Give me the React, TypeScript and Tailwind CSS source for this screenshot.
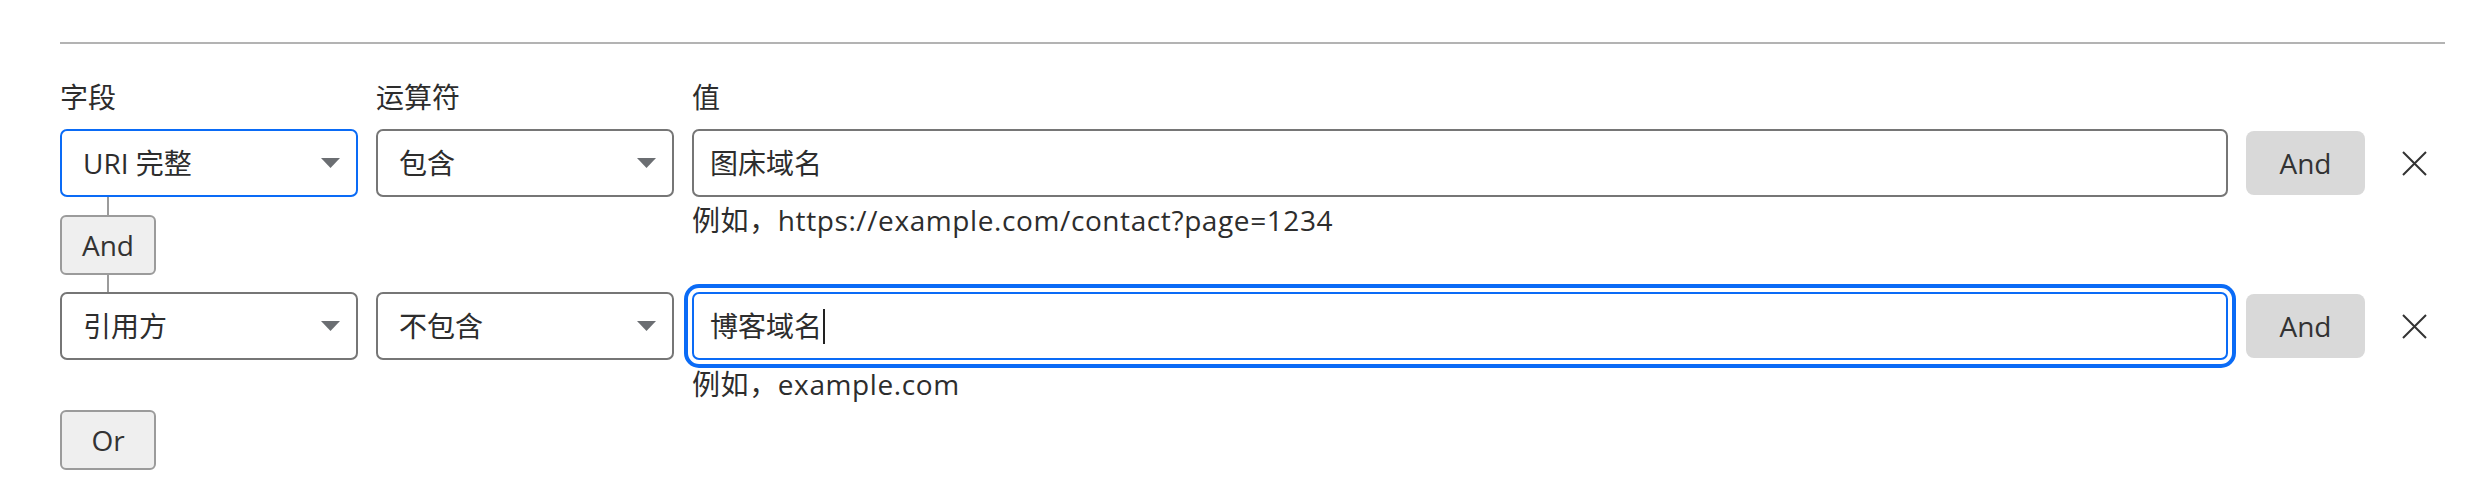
import React from 'react';

const font = { fontFamily: '"Open Sans", "Noto Sans CJK SC", sans-serif' };

function Caret() {
  return (
    <svg width="19" height="10" viewBox="0 0 19 10" className="shrink-0">
      <polygon points="0,0 19,0 9.5,10" fill="#6b6e72" />
    </svg>
  );
}

function FakeSelect({ value, focused }: { value: string; focused?: boolean }) {
  return (
    <div
      className={`flex h-[68px] items-center justify-between rounded-[7px] border-2 bg-white pl-[21px] pr-[16px] ${
        focused ? 'border-[#0a6bf6]' : 'border-[#767676]'
      }`}
    >
      <span className="leading-none">{value}</span>
      <Caret />
    </div>
  );
}

function FakeInput({ value, focused }: { value: string; focused?: boolean }) {
  return (
    <div
      className={`flex h-[68px] items-center rounded-[7px] border-2 bg-white pl-[16px] ${
        focused
          ? 'border-[#0a6bf6] shadow-[0_0_0_4px_#ffffff,0_0_0_8px_#0a6bf6]'
          : 'border-[#767676]'
      }`}
    >
      <span className="leading-none">{value}</span>
      {focused && <span className="ml-[1px] inline-block h-[35px] w-[2px] bg-[#222]" />}
    </div>
  );
}

function AndButton() {
  return (
    <button className="h-[64px] w-[119px] self-center rounded-[8px] bg-[#d9d9d9] text-[#333]">
      And
    </button>
  );
}

function RemoveButton() {
  return (
    <button className="flex h-[68px] w-full items-center justify-center">
      <svg width="25" height="25" viewBox="0 0 25 25">
        <path d="M1 1 L24 24 M24 1 L1 24" stroke="#333" strokeWidth="2" fill="none" />
      </svg>
    </button>
  );
}

function GhostButton({ label }: { label: string }) {
  return (
    <button className="h-[60px] w-[96px] rounded-[6px] border-2 border-[#9b9b9b] bg-[#efefef] text-[#333]">
      {label}
    </button>
  );
}

export default function App() {
  return (
    <div
      className="h-[477px] overflow-hidden bg-white pl-[60px] pr-[20px] text-[28px] text-[#2d2d2d]"
      style={font}
    >
      <div className="h-[42px]" />
      <div className="h-[2px] bg-[#b3b3b3]" />

      <div className="mt-[32px] grid grid-cols-[298px_298px_minmax(0,1fr)_119px_62px] gap-x-[18px]">
        {/* labels */}
        <div className="leading-[42px]">字段</div>
        <div className="leading-[42px]">运算符</div>
        <div className="leading-[42px]">值</div>
        <div />
        <div />

        {/* condition 1 */}
        <div className="mt-[11px]">
          <FakeSelect value="URI 完整" focused />
        </div>
        <div className="mt-[11px]">
          <FakeSelect value="包含" />
        </div>
        <div className="mt-[11px]">
          <FakeInput value="图床域名" />
        </div>
        <div className="mt-[11px] flex">
          <AndButton />
        </div>
        <div className="mt-[11px]">
          <RemoveButton />
        </div>

        {/* connector + hint */}
        <div className="flex w-[96px] flex-col items-center">
          <div className="h-[18px] w-[2px] bg-[#9b9b9b]" />
          <GhostButton label="And" />
          <div className="h-[17px] w-[2px] bg-[#9b9b9b]" />
        </div>
        <div />
        <div className="mt-[2px] leading-[42px] tracking-[0.6px]">
          例如，https://example.com/contact?page=1234
        </div>
        <div />
        <div />

        {/* condition 2 */}
        <FakeSelect value="引用方" />
        <FakeSelect value="不包含" />
        <FakeInput value="博客域名" focused />
        <div className="flex">
          <AndButton />
        </div>
        <RemoveButton />

        {/* hint 2 */}
        <div />
        <div />
        <div className="mt-[3px] leading-[42px] tracking-[0.6px]">例如，example.com</div>
        <div />
        <div />

        {/* or */}
        <div className="mt-[5px]">
          <GhostButton label="Or" />
        </div>
      </div>
    </div>
  );
}
